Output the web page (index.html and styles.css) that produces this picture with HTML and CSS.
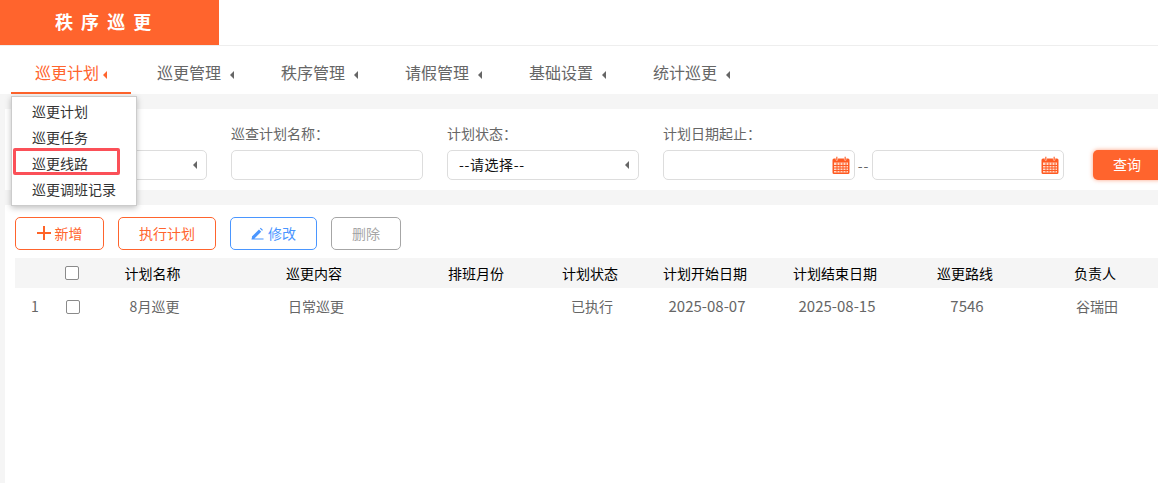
FILE: index.html
```html
<!DOCTYPE html>
<html lang="zh-CN">
<head>
<meta charset="utf-8">
<title>秩序巡更</title>
<link rel="stylesheet" href="styles.css">
</head>
<body>
<header class="top"><div class="logo">秩 序 巡 更</div></header>
<nav class="nav">
  <div class="tab active"><span>巡更计划</span><i class="arrow"></i></div>
  <div class="tab"><span>巡更管理</span><i class="arrow"></i></div>
  <div class="tab"><span>秩序管理</span><i class="arrow"></i></div>
  <div class="tab"><span>请假管理</span><i class="arrow"></i></div>
  <div class="tab"><span>基础设置</span><i class="arrow"></i></div>
  <div class="tab"><span>统计巡更</span><i class="arrow"></i></div>
</nav>
<main class="main">
  <section class="search">
    <div class="field"><label></label><div class="box select"><i class="arrow"></i></div></div>
    <div class="field"><label>巡查计划名称：</label><div class="box"></div></div>
    <div class="field"><label>计划状态：</label><div class="box select"><span class="val">--请选择--</span><i class="arrow"></i></div></div>
    <div class="field dates">
      <label>计划日期起止：</label>
      <div class="range">
        <div class="box date"><svg class="cal" viewBox="0 0 18 18"><use href="#cal"/></svg></div>
        <span class="dash">--</span>
        <div class="box date"><svg class="cal" viewBox="0 0 18 18"><use href="#cal"/></svg></div>
      </div>
    </div>
    <button class="query">查询</button>
  </section>
  <section class="list">
    <div class="tools">
      <button class="btn orange b-add"><svg class="plus" viewBox="0 0 14 14"><path d="M7 0v14M0 7h14" stroke="#ff6428" stroke-width="2" fill="none"/></svg>新增</button>
      <button class="btn orange b-run">执行计划</button>
      <button class="btn blue b-edit"><svg class="pen" viewBox="0 0 14 14"><path d="M1 10.2 8.6 2.6l2.4 2.4-7.6 7.6H1zM9.5 1.7l1-1 2.4 2.4-1 1zM0.5 12.3h13v1.2H.5z" fill="#4a96ff"/></svg>修改</button>
      <button class="btn gray b-del">删除</button>
    </div>
    <div class="row head">
      <div></div><div><span class="check"></span></div><div>计划名称</div><div>巡更内容</div><div>排班月份</div><div>计划状态</div><div>计划开始日期</div><div>计划结束日期</div><div>巡更路线</div><div>负责人</div>
    </div>
    <div class="row body">
      <div>1</div><div><span class="check"></span></div><div>8月巡更</div><div>日常巡更</div><div></div><div>已执行</div><div class="num">2025-08-07</div><div class="num">2025-08-15</div><div class="num">7546</div><div>谷瑞田</div>
    </div>
  </section>
</main>
<div class="menu">
  <div>巡更计划</div><div>巡更任务</div><div>巡更线路</div><div>巡更调班记录</div>
</div>
<div class="mark"></div>
<svg class="defs" width="0" height="0"><defs><g id="cal">
  <path d="M2 2.5h14a1.5 1.5 0 0 1 1.5 1.5v12.500a1.500 1.500 0 0 1-1.500 1.500H2a1.500 1.500 0 0 1-1.500-1.500V4A1.500 1.500 0 0 1 2 2.500z" fill="#ff5a22"/>
  <rect x="4" y="0.500" width="1.600" height="4" rx=".8" fill="#ff5a22" stroke="#fff" stroke-width=".5"/>
  <rect x="12.400" y="0.500" width="1.600" height="4" rx=".8" fill="#ff5a22" stroke="#fff" stroke-width=".5"/>
  <rect x="2" y="6.500" width="14" height="10" fill="#ffd9c8"/>
  <path d="M2 9.500h14M2 12h14M2 14.500h14M5 6.500v10M8 6.500v10M11 6.500v10M14 6.500v10" stroke="#ff5a22" stroke-width="1"/>
</g></defs></svg>
</body>
</html>
```
FILE: styles.css
```css
* { box-sizing: border-box; }
html, body { margin: 0; height: 100%; }
body {
  width: 1158px; height: 483px; overflow: hidden; position: relative; background: #fff;
  font-family: "Noto Sans CJK SC", "Noto Sans", sans-serif; font-size: 14px; color: #666;
}
.top { height: 46px; border-bottom: 1px solid #eee; }
.logo {
  width: 219px; height: 45px; background: #ff642d; color: #fff; padding-left: 55px;
  font-size: 18px; font-weight: 700; line-height: 43px; text-align: left; letter-spacing: 2px;
}
.nav { height: 48px; display: flex; padding-left: 11px; }
.tab {
  width: 124px; flex: none; height: 48px; padding: 0 0 0 24px; font-size: 16px; line-height: 53px;
  color: #666; display: flex; align-items: flex-start;
}
.tab .arrow { margin: 25px 0 0 9px; }
.tab.active { color: #ff642d; border-bottom: 2px solid #ff642d; width: 120px; margin-right: 2px; }
.tab.active .arrow { border-right-color: #ff642d; margin-left: 4px; }
.arrow {
  display: block; width: 0; height: 0; border-style: solid;
  border-width: 4px 4px 4px 0; border-color: transparent #666 transparent transparent;
}
.main { background: #f5f5f5; padding: 15px 0 0 5px; height: 389px; }
.search {
  height: 81px; background: #fff; display: flex; align-items: flex-start; padding-left: 10px; gap: 24px; overflow: hidden;
}
.field { width: 192px; flex: none; padding-top: 14px; }
.field label { display: block; height: 27px; font-size: 14px; line-height: 20px; color: #666; }
.box {
  height: 30px; border: 1px solid #ddd; border-radius: 5px; background: #fff;
  display: flex; align-items: center; position: relative;
}
.select { justify-content: space-between; padding: 0 9px 0 11px; }
.select .arrow { margin-left: auto; }
.val { font-size: 14px; color: #111; line-height: 20px; letter-spacing: .6px; padding-bottom: 2px; }
.dates { width: 401px; }
.range { display: flex; align-items: center; }
.date { width: 192px; flex: none; justify-content: flex-end; padding-right: 4px; }
.dash { width: 17px; font-size: 14px; color: #666; text-align: center; letter-spacing: 1px; }
.cal { width: 18px; height: 18px; display: block; }
.query {
  margin: 41px 0 0 5px; width: 68px; flex: none; height: 30px; border: 0; background: #ff642d; color: #fff;
  border-radius: 5px 0 0 5px; font: 14px "Noto Sans CJK SC", sans-serif; box-shadow: 0 0 4px rgba(255,100,45,.6); padding: 0 0 2px;
}
.list { margin-top: 15px; background: #fff; height: 278px; padding: 12px 0 0 10px; }
.tools { display: flex; height: 41px; }
.btn {
  height: 33px; border-radius: 5px; background: #fff; font: 14px "Noto Sans CJK SC", sans-serif;
  display: flex; align-items: center; justify-content: center; padding: 0 0 1px; border: 1px solid;
}
.orange { border-color: #ff642d; color: #ff642d; }
.blue { border-color: #4a96ff; color: #4a96ff; }
.gray { border-color: #a6a6a6; color: #a6a6a6; }
.b-add { width: 89px; margin-right: 14px; }
.b-run { width: 98px; margin-right: 14px; }
.b-edit { width: 87px; margin-right: 14px; }
.b-del { width: 70px; }
.plus { width: 14px; height: 14px; margin-right: 4px; }
.pen { width: 13px; height: 13px; margin-right: 4px; }
.row {
  display: grid; width: 1146px; text-align: center; align-items: center;
  grid-template-columns: 40px 35px 125px 198px 126px 102px 128px 132px 128px 132px;
}
.head { height: 30px; background: #f5f5f5; color: #000; font-size: 14px; line-height: 26px; }
.body {
  height: 38px; color: #666; font-size: 14px; line-height: 36px; width: 1148px; align-items: start;
  grid-template-columns: 40px 37px 125px 198px 126px 102px 128px 132px 128px 132px;
}
.num { font-size: 15px; }
.check {
  display: block; width: 14px; height: 14px; margin: 0 auto; border: 1px solid #8a8a8a; border-radius: 2px; background: #fff;
}
.head .check { margin-left: 10px; }
.body .check { margin: 12px 0 0 11px; }
.menu {
  position: absolute; left: 11px; top: 96px; width: 126px; height: 110px; background: #fff;
  border: 1px solid #ccc; box-shadow: 0 2px 6px rgba(0,0,0,.25); padding: 1px 0 0 20px; color: #333;
}
.menu div { height: 26px; line-height: 26px; font-size: 14px; }
.mark {
  position: absolute; left: 13px; top: 148px; width: 107px; height: 27px; border: 3px solid #fb5058; border-radius: 2px;
}
.defs { position: absolute; }
```
